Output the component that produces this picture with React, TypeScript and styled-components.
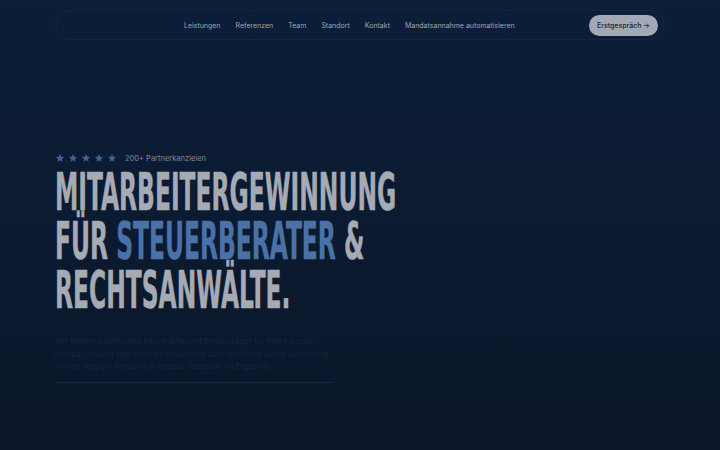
import React from "react";
import styled, { createGlobalStyle } from "styled-components";

const navLinks = [
  "Leistungen",
  "Referenzen",
  "Team",
  "Standort",
  "Kontakt",
  "Mandatsannahme automatisieren",
];

const stats = ["Kanzleien", "Bewerbungen", "Einstellungen", "Zufriedenheit"];

const GlobalStyle = createGlobalStyle`
  html, body {
    margin: 0;
    padding: 0;
    background: #0b1a2f;
  }
  * {
    box-sizing: border-box;
  }
`;

const Star = () => (
  <svg width="10" height="10" viewBox="0 0 24 24">
    <path
      d="M12 2.2l2.9 6.6 7.1.6-5.4 4.7 1.6 7-6.2-3.7-6.2 3.7 1.6-7L2 9.4l7.1-.6z"
      fill="#3f6092"
    />
  </svg>
);

const App = () => {
  return (
    <Page>
      <GlobalStyle />
      <Nav>
        <Links>
          {navLinks.map((link) => (
            <NavLink key={link}>{link}</NavLink>
          ))}
        </Links>
        <CtaButton>Erstgespräch →</CtaButton>
      </Nav>

      <Hero>
        <Rating>
          <Stars>
            {[0, 1, 2, 3, 4].map((i) => (
              <Star key={i} />
            ))}
          </Stars>
          <RatingText>200+ Partnerkanzleien</RatingText>
        </Rating>
        <Headline>
          <Line>Mitarbeitergewinnung</Line>
          <Line>
            Für <Accent>Steuerberater</Accent> &amp;
          </Line>
          <Line>Rechtsanwälte.</Line>
        </Headline>
        <Lead>
          Wir finden qualifizierte Fachkräfte und Berufsträger für Ihre Kanzlei –
          planbar, diskret und ohne Streuverluste über gezieltes Social Recruiting
          in Ihrer Region. Persönlich betreut, messbar im Ergebnis.
        </Lead>
        <Divider />
      </Hero>

      <StatRow>
        {stats.map((s) => (
          <Stat key={s}>{s}</Stat>
        ))}
      </StatRow>
    </Page>
  );
};

export default App;

const Page = styled.div`
  width: 720px;
  height: 450px;
  overflow: hidden;
  padding: 10px 55px 0;
  background: linear-gradient(180deg, #0c1e38 0%, #0b1b32 45%, #0b1628 100%);
  font-family: Inter, "Noto Sans", sans-serif;
  display: flex;
  flex-direction: column;
`;

const Nav = styled.nav`
  height: 30px;
  display: flex;
  align-items: center;
  padding: 0 6px 0 128px;
  border: 1px solid rgba(255, 255, 255, 0.035);
  border-radius: 16px;
`;

const Links = styled.div`
  display: flex;
  gap: 15px;
`;

const NavLink = styled.span`
  font-size: 7px;
  color: #9ca4b3;
  white-space: nowrap;
`;

const CtaButton = styled.span`
  margin-left: auto;
  height: 21px;
  padding: 0 8px;
  display: flex;
  align-items: center;
  border-radius: 11px;
  background: #a2a8b4;
  color: #1a2538;
  font-size: 7px;
  font-weight: 500;
  white-space: nowrap;
`;

const Hero = styled.section`
  margin-top: 113px;
  display: flex;
  flex-direction: column;
`;

const Rating = styled.div`
  height: 10px;
  display: flex;
  align-items: center;
  gap: 8px;
`;

const Stars = styled.div`
  display: flex;
  gap: 3px;
`;

const RatingText = styled.span`
  font-size: 7.5px;
  color: #7f899b;
`;

const Headline = styled.h1`
  margin: 5px 0 0;
  display: flex;
  flex-direction: column;
  font-family: "DejaVu Sans Condensed", "DejaVu Sans", sans-serif;
  font-weight: 700;
  font-size: 51px;
  text-transform: uppercase;
  color: #a6aab3;
  white-space: nowrap;
  transform: scaleX(0.51);
  transform-origin: left top;
  -webkit-text-stroke: 0.5px #a6aab3;
`;

const Line = styled.span`
  display: block;
  height: 49px;
  line-height: 49px;
`;

const Accent = styled.span`
  color: #4a72a8;
  -webkit-text-stroke: 0.5px #4a72a8;
`;

const Lead = styled.p`
  margin: 20px 0 0;
  width: 280px;
  font-size: 8px;
  font-weight: 500;
  line-height: 12.5px;
  color: #13233b;
`;

const Divider = styled.div`
  margin-top: 9px;
  width: 278px;
  height: 1px;
  background: #1a2942;
`;

const StatRow = styled.div`
  margin-top: 42px;
  display: flex;
  justify-content: space-between;
  padding: 0 20px;
`;

const Stat = styled.span`
  font-size: 9px;
  color: #0e1b2e;
`;
